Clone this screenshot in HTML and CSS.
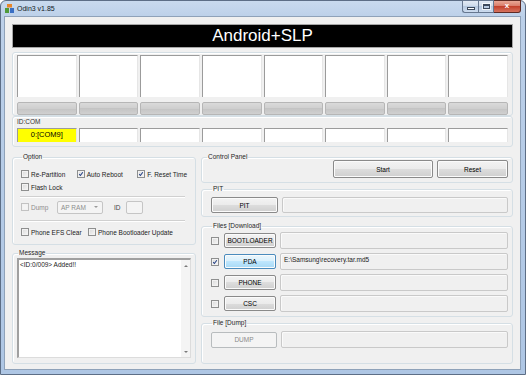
FILE: index.html
```html
<!DOCTYPE html>
<html lang="en">
<head>
    <meta charset="UTF-8">
    <title>Odin3 v1.85</title>
    <link rel="stylesheet" href="styles.css">
</head>
<body>
    <div class="window">
        <!-- title bar -->
        <div class="titlebar">
            <svg class="app-icon" viewBox="0 0 9 9" width="9" height="9">
                <rect x="2" y="0" width="5" height="3.5" fill="#e8862a"/>
                <rect x="0" y="4" width="4" height="5" fill="#4f9a3a"/>
                <rect x="5" y="4" width="4" height="5" fill="#3a6fc4"/>
            </svg>
            <span class="title">Odin3 v1.85</span>
            <div class="caption">
                <span class="cap min"><i></i></span>
                <span class="cap max"><i></i></span>
                <span class="cap close">x</span>
            </div>
        </div>

        <div class="client">
            <div class="banner">Android+SLP</div>

            <!-- device slots -->
            <div class="group slots-group">
                <div class="slots">
                    <div class="slot"></div><div class="slot"></div><div class="slot"></div><div class="slot"></div>
                    <div class="slot"></div><div class="slot"></div><div class="slot"></div><div class="slot"></div>
                </div>
                <div class="bars">
                    <div class="bar"></div><div class="bar"></div><div class="bar"></div><div class="bar"></div>
                    <div class="bar"></div><div class="bar"></div><div class="bar"></div><div class="bar"></div>
                </div>
            </div>

            <div class="group ports-group">
                <div class="small-label">ID:COM</div>
                <div class="ports">
                    <div class="port active">0:[COM9]</div>
                    <div class="port"></div><div class="port"></div><div class="port"></div>
                    <div class="port"></div><div class="port"></div><div class="port"></div><div class="port"></div>
                </div>
            </div>

            <div class="lower">
                <div class="col-left">
                    <fieldset class="box option">
                        <legend>Option</legend>
                        <div class="opt-row first">
                            <label class="opt w57"><span class="cb"></span>Re-Partition</label>
                            <label class="opt w62"><span class="cb"><svg viewBox="0 0 8 8"><path d="M1.6 4.2 L3.2 6 L6.4 1.6"/></svg></span>Auto Reboot</label>
                            <label class="opt"><span class="cb"><svg viewBox="0 0 8 8"><path d="M1.6 4.2 L3.2 6 L6.4 1.6"/></svg></span>F. Reset Time</label>
                        </div>
                        <div class="opt-row">
                            <label class="opt"><span class="cb"></span>Flash Lock</label>
                        </div>
                        <div class="sep"></div>
                        <div class="opt-row dump-row">
                            <label class="opt off w36"><span class="cb"></span>Dump</label>
                            <div class="combo">AP RAM<span class="arrow"></span></div>
                            <span class="id-label">ID</span>
                            <div class="id-input"></div>
                        </div>
                        <div class="sep second"></div>
                        <div class="opt-row phone-row">
                            <label class="opt w67"><span class="cb"></span>Phone EFS Clear</label>
                            <label class="opt"><span class="cb"></span>Phone Bootloader Update</label>
                        </div>
                    </fieldset>

                    <fieldset class="box message">
                        <legend>Message</legend>
                        <div class="log">
                            <div class="log-text">&lt;ID:0/009&gt; Added!!</div>
                            <div class="scroll"><span class="up"></span><span class="down"></span></div>
                        </div>
                    </fieldset>
                </div>

                <div class="col-right">
                    <fieldset class="box control">
                        <legend>Control Panel</legend>
                        <div class="controls">
                            <div class="btn start">Start</div>
                            <div class="btn reset">Reset</div>
                        </div>
                    </fieldset>

                    <fieldset class="box pit">
                        <legend>PIT</legend>
                        <div class="file-row">
                            <div class="btn wide">PIT</div>
                            <div class="field"></div>
                        </div>
                    </fieldset>

                    <fieldset class="box files">
                        <legend>Files [Download]</legend>
                        <div class="file-list">
                            <div class="file-row">
                                <span class="cb"></span>
                                <div class="btn file">BOOTLOADER</div>
                                <div class="field"></div>
                            </div>
                            <div class="file-row">
                                <span class="cb"><svg viewBox="0 0 8 8"><path d="M1.6 4.2 L3.2 6 L6.4 1.6"/></svg></span>
                                <div class="btn file hot">PDA</div>
                                <div class="field">E:\Samsung\recovery.tar.md5</div>
                            </div>
                            <div class="file-row">
                                <span class="cb"></span>
                                <div class="btn file">PHONE</div>
                                <div class="field"></div>
                            </div>
                            <div class="file-row">
                                <span class="cb"></span>
                                <div class="btn file">CSC</div>
                                <div class="field"></div>
                            </div>
                        </div>
                    </fieldset>

                    <fieldset class="box dump">
                        <legend>File [Dump]</legend>
                        <div class="file-row">
                            <div class="btn wide off">DUMP</div>
                            <div class="field"></div>
                        </div>
                    </fieldset>
                </div>
            </div>
        </div>
    </div>
</body>
</html>
```

FILE: styles.css
```css
* {
    box-sizing: border-box;
}

html, body {
    margin: 0;
    padding: 0;
}

body {
    width: 526px;
    height: 375px;
    overflow: hidden;
    font-family: "Liberation Sans", Arial, sans-serif;
    font-size: 6.5px;
    color: #1b1b1b;
    background: #fff;
}

/* window frame */
.window {
    width: 526px;
    height: 375px;
    display: flex;
    flex-direction: column;
    border: 1px solid #5d6e86;
    border-radius: 6px 6px 0 0;
    background: linear-gradient(to bottom, #c9daee 0, #bcd0e9 16px, #aec6e4 100%);
}

.titlebar {
    height: 16px;
    display: flex;
    align-items: center;
    padding-left: 4px;
}

.app-icon {
    flex: none;
}

.title {
    margin-left: 3px;
    font-size: 7px;
    color: #111a24;
}

.caption {
    margin-left: auto;
    margin-right: 4px;
    margin-top: -1px;
    align-self: flex-start;
    display: flex;
}

.cap {
    height: 13px;
    border: 1px solid #66778f;
    display: flex;
    align-items: center;
    justify-content: center;
    background: linear-gradient(#e2eaf4 0, #ccdaea 50%, #b6c9e0 50%, #cddcee 100%);
}

.cap.min {
    width: 16px;
    border-radius: 0 0 0 3px;
    border-right: none;
}

.cap.min i {
    width: 6px;
    height: 1px;
    margin-top: 4px;
    background: #fff;
    border: 1px solid #3c4a5c;
    box-sizing: content-box;
}

.cap.max {
    width: 16px;
}

.cap.max i {
    width: 7px;
    height: 5px;
    border: 1px solid #3c4a5c;
    border-top-width: 2px;
    box-shadow: 0 0 0 1px rgba(255, 255, 255, 0.7);
}

.cap.close {
    width: 27px;
    border-left: none;
    border-color: #5e2b24;
    border-radius: 0 0 3px 0;
    background: linear-gradient(#e9a896 0, #d87866 50%, #c4412c 50%, #d6735e 100%);
    color: #fff;
    font-weight: bold;
    font-size: 8px;
    line-height: 8px;
    padding-bottom: 2px;
}

/* client area */
.client {
    height: 354px;
    margin: 0 4px 4px 3px;
    border: 1px solid #8fa2b9;
    background: #f0f0f0;
    padding: 7px 7px 5px 7px;
    display: flex;
    flex-direction: column;
}

.banner {
    height: 24px;
    background: #000;
    border: 1px solid #a6a6a6;
    color: #fff;
    font-size: 17px;
    line-height: 22px;
    text-align: center;
}

.group {
    border: 1px solid #d5dfe5;
    border-radius: 3px;
    box-shadow: inset 1px 1px 0 #fff;
}

.slots-group {
    margin-top: 4px;
    padding: 2px 4px 0 4px;
}

.slots, .bars, .ports {
    display: flex;
    gap: 2px;
}

.slot {
    flex: 1;
    height: 42px;
    background: #fff;
    border-top: 1px solid #9b9b9b;
    border-left: 1px solid #9b9b9b;
    border-right: 1px solid #e6e6e6;
}

.bars {
    margin-top: 5px;
}

.bar {
    flex: 1;
    height: 13px;
    border: 1px solid #b6b6b6;
    border-radius: 2px;
    background: linear-gradient(#dadada 0, #cfcfcf 50%, #c4c4c4 50%, #d0d0d0 100%);
}

.ports-group {
    padding: 1px 4px 4px 4px;
}

.small-label {
    line-height: 8px;
    color: #333;
}

.ports {
    margin-top: 2px;
}

.port {
    flex: 1;
    height: 14px;
    background: #fff;
    border-top: 1px solid #9b9b9b;
    border-left: 1px solid #9b9b9b;
    border-right: 1px solid #e6e6e6;
    text-align: center;
    line-height: 12px;
    font-size: 7.5px;
    color: #000;
}

.port.active {
    background: #ffff00;
}

/* lower panels */
.lower {
    flex: 1;
    margin-top: 6px;
    display: flex;
    gap: 5px;
}

.col-left {
    width: 184px;
    display: flex;
    flex-direction: column;
}

.col-right {
    flex: 1;
    display: flex;
    flex-direction: column;
}

.box {
    margin: 0;
    min-width: 0;
    border: 1px solid #d5dfe5;
    border-radius: 3px;
    box-shadow: inset 1px 1px 0 #fff;
}

.box legend {
    padding: 0 1px;
    margin-left: 1px;
    line-height: 8px;
    font-size: 6.5px;
    color: #1e1e1e;
}

.option {
    padding: 0 8px 7px 8px;
}

.opt-row {
    height: 10px;
    display: flex;
    align-items: center;
    margin-top: 3px;
}

.opt-row.first {
    margin-top: 8px;
}

.opt {
    display: flex;
    align-items: center;
    white-space: nowrap;
}

.w57 { width: 57px; }
.w62 { width: 62px; }
.w36 { width: 36px; }
.w67 { width: 67px; }

.opt.off {
    color: #8d8d8d;
}

.cb {
    flex: none;
    width: 8px;
    height: 8px;
    margin-right: 2px;
    border: 1px solid #8e8f8f;
    background: linear-gradient(135deg, #d9d9d9, #f7f7f7);
    box-shadow: inset 0 0 0 1px #f2f2f2;
    display: flex;
}

.opt.off .cb {
    border-color: #c2c2c2;
    background: #f4f4f4;
}

.cb svg {
    width: 6px;
    height: 6px;
}

.cb path {
    fill: none;
    stroke: #233f84;
    stroke-width: 1.4;
}

.sep {
    margin-top: 4px;
    height: 2px;
    border-top: 1px solid #d0d0d0;
    border-bottom: 1px solid #fff;
    margin-right: 2px;
    margin-left: -1px;
}

.sep.second {
    margin-top: 6px;
}

.dump-row {
    height: 14px;
    margin-top: 2px;
}

.combo {
    width: 46px;
    height: 13px;
    border: 1px solid #c5c5c5;
    border-radius: 2px;
    background: #f4f4f4;
    color: #8d8d8d;
    padding-left: 3px;
    line-height: 11px;
    display: flex;
    justify-content: space-between;
    align-items: center;
}

.arrow {
    width: 0;
    height: 0;
    margin-right: 4px;
    border-left: 2px solid transparent;
    border-right: 2px solid transparent;
    border-top: 2px solid #9a9a9a;
}

.id-label {
    margin-left: 11px;
    color: #444;
}

.id-input {
    width: 17px;
    height: 13px;
    margin-left: 5px;
    border: 1px solid #c5c5c5;
    border-radius: 2px;
    background: #f4f4f4;
}

.phone-row {
    margin-top: 5px;
}

.message {
    flex: 1;
    margin-top: 4px;
    padding: 0 4px 5px 4px;
}

.log {
    margin-top: 1px;
    height: 100px;
    display: flex;
    background: #fff;
    border-top: 2px solid #a0a0a0;
    border-left: 2px solid #a0a0a0;
    border-right: 1px solid #dcdcdc;
    border-bottom: 1px solid #dcdcdc;
}

.log-text {
    flex: 1;
    padding: 1px 0 0 1px;
    line-height: 8px;
    color: #1b1b1b;
}

.scroll {
    width: 9px;
    background: #f4f4f4;
    display: flex;
    flex-direction: column;
    justify-content: space-between;
    align-items: center;
    padding: 5px 0 4px;
}

.up {
    border-left: 2px solid transparent;
    border-right: 2px solid transparent;
    border-bottom: 2px solid #7a7a7a;
}

.down {
    border-left: 2px solid transparent;
    border-right: 2px solid transparent;
    border-top: 2px solid #7a7a7a;
}

/* buttons and path fields */
.btn {
    display: flex;
    align-items: center;
    justify-content: center;
    border: 1px solid #8a8a8a;
    border-radius: 2px;
    background: linear-gradient(#f3f3f3 0, #ebebeb 50%, #dddddd 50%, #cfcfcf 100%);
    box-shadow: inset 0 0 0 1px #fbfbfb;
    color: #000;
}

.btn.hot {
    border-color: #4a8bbd;
    background: linear-gradient(#eaf6fd 0, #d9f0fc 50%, #bee6fd 50%, #a7d9f5 100%);
}

.btn.off {
    border-color: #b8bcbe;
    background: #f4f4f4;
    box-shadow: none;
    color: #8a8a8a;
}

.control {
    padding: 0 4px 4px 4px;
}

.controls {
    margin-top: -1px;
    display: flex;
    justify-content: flex-end;
    gap: 4px;
}

.start {
    width: 100px;
    height: 18px;
}

.reset {
    width: 71px;
    height: 18px;
}

.pit {
    margin-top: 2px;
    padding: 0 4px 3px 9px;
}

.pit .file-row {
    margin-top: 4px;
    height: 16px;
}

.file-row {
    display: flex;
    align-items: center;
    height: 17px;
}

.btn.wide {
    width: 67px;
    height: 16px;
}

.field {
    flex: 1;
    height: 17px;
    margin-left: 4px;
    border: 1px solid #c9c9c9;
    border-radius: 2px;
    background: #f0f0f0;
    box-shadow: inset 1px 1px 0 #fafafa;
    padding: 2px 3px;
    line-height: 8px;
    color: #1b1b1b;
}

.pit .field {
    height: 16px;
}

.files {
    margin-top: 5px;
    padding: 0 4px 4px 9px;
}

.file-list {
    margin-top: 2px;
    display: flex;
    flex-direction: column;
    gap: 4px;
}

.btn.file {
    width: 52px;
    height: 15px;
    margin-left: 5px;
}

.file-row .cb {
    margin-right: 0;
}

.dump {
    flex: 1;
    margin-top: 2px;
    padding: 0 4px 0 9px;
}

.dump .file-row {
    margin-top: 4px;
}

.dump .btn.wide {
    width: 66px;
}
```
